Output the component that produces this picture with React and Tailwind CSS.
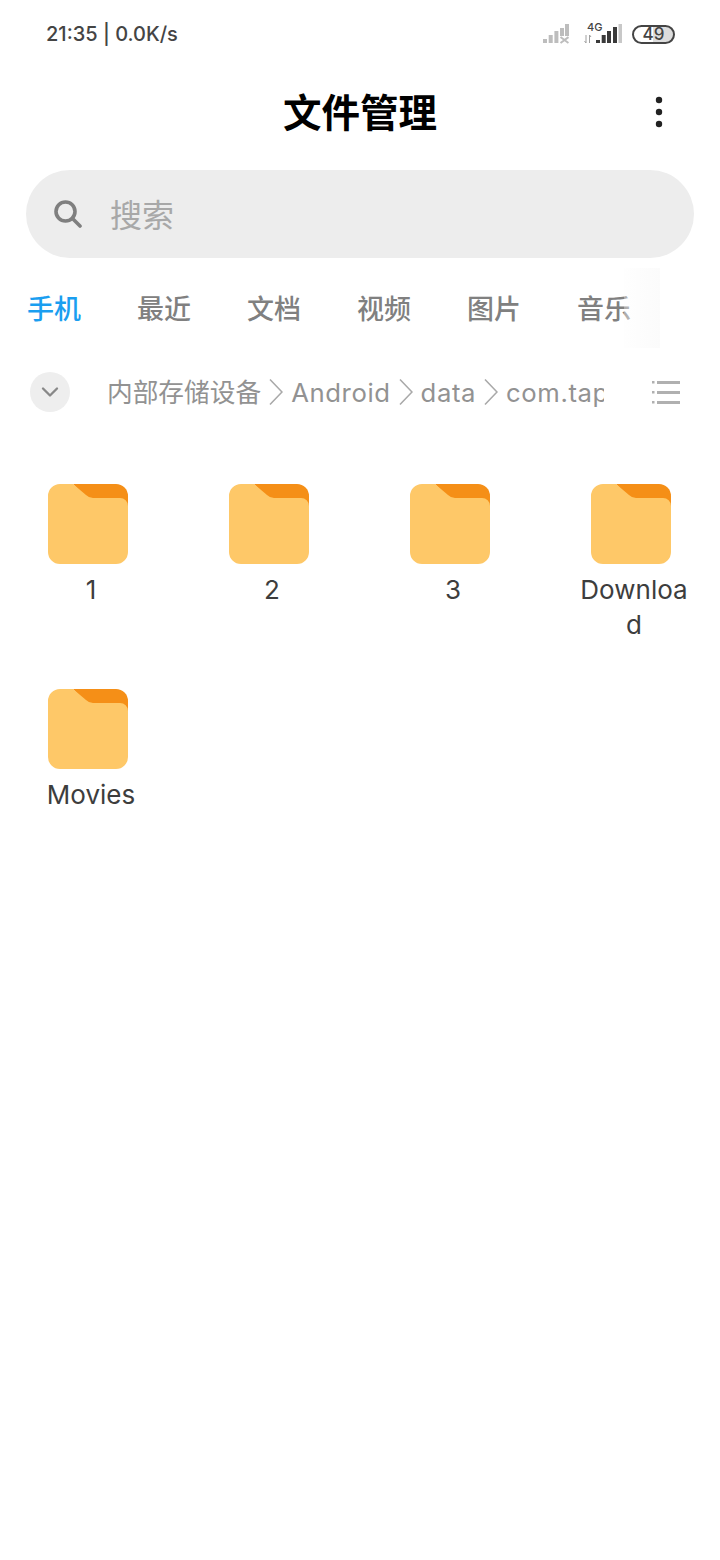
import React from 'react';
import { ChevronDown } from 'lucide-react';

const tabs = ['手机', '最近', '文档', '视频', '图片', '音乐'];
const folders = ['1', '2', '3', 'Download', 'Movies'];
const crumbs = ['内部存储设备', 'Android', 'data', 'com.tap'];

const SimOff = () => (
  <svg width="26" height="20" viewBox="0 0 26 20" fill="#bdbdbd">
    <rect x="0" y="15" width="4" height="4" />
    <rect x="5.7" y="11" width="4" height="8" />
    <rect x="11.4" y="7" width="4" height="12" />
    <rect x="17" y="4" width="4" height="8" />
    <rect x="22" y="0" width="4" height="12" />
    <path d="M17.5 13l8 6M25.5 13l-8 6" stroke="#bdbdbd" strokeWidth="2" fill="none" />
  </svg>
);

const Sim4G = () => (
  <svg width="38" height="20" viewBox="0 0 38 20">
    <path d="M2 11v8M0.5 17l1.5 2M5.5 11v8M5.5 11l1.5 2" stroke="#a0a0a0" strokeWidth="1" fill="none" />
    <rect x="12" y="16" width="4" height="3" fill="#3a3a3a" />
    <rect x="17.7" y="11" width="4" height="8" fill="#3a3a3a" />
    <rect x="23" y="7" width="4" height="12" fill="#3a3a3a" />
    <rect x="29" y="3" width="4" height="16" fill="#3a3a3a" />
    <rect x="34.5" y="0" width="3.5" height="19" fill="#c8c8c8" />
  </svg>
);

const Folder = () => (
  <svg width="80" height="80" viewBox="0 0 80 80">
    <path d="M25 0H68a12 12 0 0 1 12 12V24L40 16Z" fill="#f58f17" />
    <path d="M12 0H25L38 11Q41 14 45 14H72a8 8 0 0 1 8 8V68a12 12 0 0 1-12 12H12A12 12 0 0 1 0 68V12A12 12 0 0 1 12 0Z" fill="#fec868" />
  </svg>
);

const ListIcon = () => (
  <svg width="28" height="24" viewBox="0 0 28 24" fill="#b0b0b0">
    <rect x="0" y="1" width="2.5" height="2.5" />
    <rect x="5" y="1" width="23" height="3" />
    <rect x="0" y="11" width="2.5" height="2.5" />
    <rect x="5" y="11" width="23" height="3" />
    <rect x="0" y="21" width="2.5" height="2.5" />
    <rect x="5" y="21" width="23" height="3" />
  </svg>
);

const SearchIcon = () => (
  <svg width="28" height="28" viewBox="0 0 28 28" fill="none" stroke="#7f7f7f" strokeWidth="3.6" strokeLinecap="round">
    <circle cx="11.5" cy="11.5" r="9.5" />
    <path d="M18.5 18.5L26 26" />
  </svg>
);

const Dots = () => (
  <svg width="8" height="32" viewBox="0 0 8 32" fill="#222222">
    <circle cx="4" cy="4" r="3.2" />
    <circle cx="4" cy="16" r="3.2" />
    <circle cx="4" cy="28" r="3.2" />
  </svg>
);

const CrumbArrow = () => (
  <svg width="14" height="28" viewBox="0 0 14 28" fill="none" stroke="#a9a9a9" strokeWidth="1.6" className="shrink-0 mx-[8px]">
    <path d="M1 1.5L13 14L1 26.5" />
  </svg>
);

const App = () => {
  return (
    <div className="w-[720px] h-[1560px] bg-white overflow-hidden font-['Inter','Noto_Sans_CJK_SC',sans-serif]">
      {/* status bar */}
      <div className="h-[68px] pl-[46px] pr-[45px] flex items-center justify-between">
        <span className="text-[20px] font-medium text-[#444444]">21:35 | 0.0K/s</span>
        <div className="flex items-center">
          <SimOff />
          <div className="relative ml-[15px] flex">
            <span className="absolute left-[3px] top-[-3px] text-[11px] leading-[12px] font-medium text-[#444444]">4G</span>
            <Sim4G />
          </div>
          <div className="ml-[10px] w-[43px] h-[19px] rounded-full border-2 border-[#444444] flex items-center justify-center text-[17px] leading-none font-medium text-[#444444] bg-[linear-gradient(90deg,#ffffff_50%,#dddddd_50%)]">
            49
          </div>
        </div>
      </div>

      {/* title */}
      <div className="relative h-[90px] flex items-center justify-center">
        <h1 className="text-[38.5px] leading-none font-bold text-black mt-[1px]">文件管理</h1>
        <div className="absolute right-[57px] top-[28px] flex">
          <Dots />
        </div>
      </div>

      {/* search */}
      <div className="mt-[12px] mx-[26px] h-[88px] rounded-[44px] bg-[#ededed] flex items-center pl-[28px]">
        <SearchIcon />
        <span className="ml-[28px] mt-[3px] text-[32px] leading-none text-[#a8a8a8]">搜索</span>
      </div>

      {/* tabs */}
      <div className="relative mt-[10px] h-[80px] pl-[27px] flex items-center gap-[56px]">
        {tabs.map((tab, i) => (
          <span
            key={tab}
            className={i === 0 ? 'mt-[2px] text-[27px] leading-none font-medium text-[#1a9ef0]' : 'mt-[2px] text-[27px] leading-none font-medium text-[#808080]'}
          >
            {tab}
          </span>
        ))}
        <div className="absolute left-[624px] top-0 w-[36px] h-[80px] bg-[linear-gradient(90deg,#fdfdfd55,#fbfbfb)]" />
      </div>

      {/* breadcrumb */}
      <div className="mt-[4px] h-[80px] pl-[30px] flex items-center">
        <div className="w-[40px] h-[40px] rounded-full bg-[#eeeeee] flex items-center justify-center">
          <ChevronDown size={28} strokeWidth={2} className="text-[#888888]" />
        </div>
        <div className="ml-[37px] w-[497px] overflow-hidden flex items-center whitespace-nowrap text-[25.7px] leading-[36px] text-[#929292]">
          {crumbs.map((crumb, i) => (
            <React.Fragment key={crumb}>
              {i > 0 && <CrumbArrow />}
              <span className={i === 0 ? 'shrink-0 mt-[2px]' : 'shrink-0 mt-[2px] tracking-[0.6px]'}>{crumb}</span>
            </React.Fragment>
          ))}
        </div>
        <div className="ml-[48px] flex">
          <ListIcon />
        </div>
      </div>

      {/* folders */}
      <div className="mt-[52px] pl-[36px] grid grid-cols-[181px_181px_181px_110px] gap-y-[47px] items-start">
        {folders.map((name) => (
          <div key={name} className="w-[110px]">
            <div className="ml-[12px] flex">
              <Folder />
            </div>
            <p className="mt-[8px] text-center text-[26px] leading-[35px] text-[#3d3d3d] break-all">{name}</p>
          </div>
        ))}
      </div>
    </div>
  );
};

export default App;
